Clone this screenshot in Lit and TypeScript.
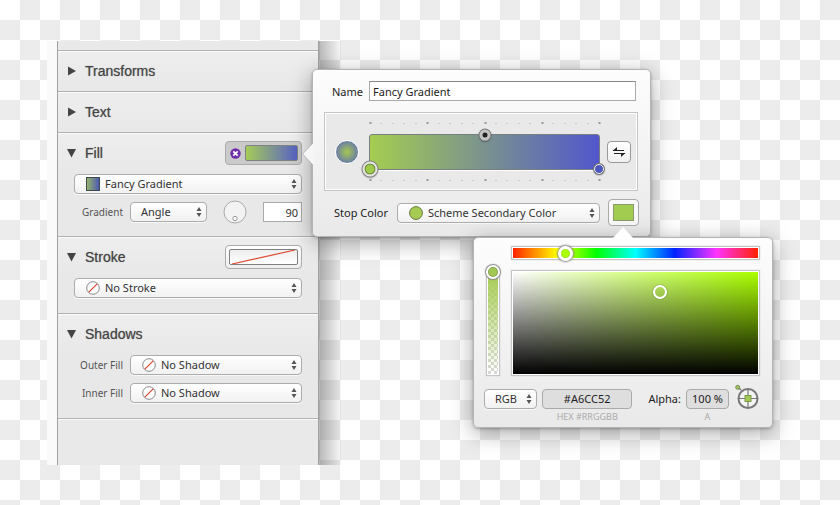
import { LitElement, html, css, svg, nothing } from "lit";
import { customElement, property } from "lit/decorators.js";

const controls = css`
  * { box-sizing: border-box; }
  button, input, select { font: inherit; color: inherit; margin: 0; }
  button { padding: 0; cursor: pointer; }
`;

@customElement("pop-select")
class PopSelect extends LitElement {
  @property() value = "";
  @property() label = "";
  @property() icon = "";
  static styles = [controls, css`
    :host { display: block; position: relative; height: 20px; min-width: 0; }
    .field {
      appearance: none; display: block; width: 100%; height: 20px; padding: 0 18px 0 10px;
      border: 1px solid #acacac; border-radius: 4px; outline: none;
      background: linear-gradient(#ffffff, #f1f1f1); box-shadow: 0 1px 0 #f8f8f8;
      color: #333; line-height: 18px;
    }
    .with-icon { padding-left: 30px; }
    .mark { position: absolute; left: 12px; top: 3px; pointer-events: none; }
    .arrows { position: absolute; right: 5px; top: 5px; pointer-events: none; }
  `];
  glyph() {
    switch (this.icon) {
      case "none":
        return svg`<circle cx="7" cy="7" r="6.3" fill="#fff" stroke="#888"/><path d="M2.8 11.2L11.2 2.8" stroke="#dd4433" stroke-width="1.2"/>`;
      case "gradient":
        return svg`<defs><linearGradient id="g"><stop offset="0" stop-color="#98b968"/><stop offset="1" stop-color="#4a55b5"/></linearGradient></defs><rect x=".5" y=".5" width="13" height="13" fill="url(#g)" stroke="#3d4a50"/>`;
      default:
        return svg`<circle cx="7" cy="7" r="6.4" fill="#a5cb52" stroke="#66763f"/>`;
    }
  }
  render() {
    return html`
      <select class="field ${this.icon ? "with-icon" : ""}" aria-label=${this.label}><option>${this.value}</option></select>
      ${this.icon ? html`<svg class="mark" width="14" height="14">${this.glyph()}</svg>` : nothing}
      <svg class="arrows" width="6" height="10"><path d="M.5 4L3 0L5.5 4ZM.5 6L3 10L5.5 6Z" fill="#555"/></svg>`;
  }
}

@customElement("side-section")
class SideSection extends LitElement {
  @property() heading = "";
  @property({ type: Boolean }) open = false;
  static styles = [controls, css`
    :host { display: block; border-top: 1px solid #b2b2b2; box-shadow: inset 0 1px 0 #fafafa; background: linear-gradient(#eeeeee, #e8e8e8 40px); }
    .head { display: flex; align-items: center; height: 40px; padding: 0 16px 0 9px; }
    .toggle {
      display: flex; align-items: center; gap: 8px; flex: 1; border: 0; background: none;
      font: 14px "Liberation Sans", Arial, sans-serif; color: #444; text-shadow: 0 0 1px #888;
    }
    .body { display: flex; flex-direction: column; gap: 8px; padding: 1px 16px 15px; }
  `];
  render() {
    return html`
      <div class="head">
        <button class="toggle" aria-expanded=${this.open}>
          <svg width="10" height="10"><path d=${this.open ? "M0 1H9L4.500 9.500Z" : "M1 .5V9.500L9 5Z"} fill="#444"/></svg>
          <span>${this.heading}</span>
        </button>
        <slot name="action"></slot>
      </div>
      ${this.open ? html`<div class="body"><slot></slot></div>` : nothing}`;
  }
}

@customElement("side-panel")
class SidePanel extends LitElement {
  static styles = [controls, css`
    :host { display: flex; flex-direction: column; box-sizing: border-box; width: 262px; border: solid #a0a0a0; border-width: 0 1px; background: #e9e9e9; color: #555; }
    .strip { height: 9px; }
    .rest { flex: 1; border-top: 1px solid #b2b2b2; box-shadow: inset 0 1px 0 #fafafa; }
    .row { display: grid; grid-template-columns: 49px minmax(0, 1fr); column-gap: 7px; align-items: center; }
    .name { text-align: right; white-space: nowrap; font-size: 10px; }
    .angle { display: flex; align-items: flex-start; height: 19px; }
    .angle pop-select { width: 77px; }
    .dial { border: 0; background: none; width: 24px; height: 24px; margin: -2px 0 0 16px; }
    .dial svg { display: block; }
    .number { width: 39px; height: 20px; margin-left: auto; padding: 0 3px; border: 1px solid #aaa; text-align: right; background: #fff; color: #333; border-radius: 0; }
    .well { display: flex; align-items: center; width: 77px; height: 24px; padding: 0 3px; border: 1px solid #acacac; border-radius: 4px; background: linear-gradient(#fff, #eee); }
    .well.active { background: #cacaca; padding-left: 4px; gap: 4px; }
    .ramp { flex: 1; height: 16px; border: 1px solid #7d8383; border-radius: 2px; background: linear-gradient(90deg, #a5cb58, #5862c4); }
    .blank { flex: 1; height: 16px; border: 1px solid #808080; border-radius: 2px; background: linear-gradient(#eee, #fff); display: block; }
  `];
  render() {
    return html`
      <div class="strip"></div>
      <side-section heading="Transforms"></side-section>
      <side-section heading="Text"></side-section>
      <side-section heading="Fill" open>
        <button slot="action" class="well active" aria-label="Edit fill">
          <svg width="11" height="11"><circle cx="5.500" cy="5.500" r="5.200" fill="#6f2da8"/><path d="M3.300 3.300L7.700 7.700M7.700 3.300L3.300 7.700" stroke="#fff" stroke-width="1.700"/></svg>
          <span class="ramp"></span>
        </button>
        <pop-select icon="gradient" label="Fill" value="Fancy Gradient"></pop-select>
        <div class="row">
          <span class="name">Gradient</span>
          <div class="angle">
            <pop-select label="Gradient" value="Angle"></pop-select>
            <button class="dial" aria-label="Angle dial">
              <svg width="24" height="24"><circle cx="12" cy="12" r="11" fill="#f3f3f3" stroke="#aaa"/><circle cx="12" cy="18.500" r="2.200" fill="#fff" stroke="#999"/></svg>
            </button>
            <input class="number" aria-label="Angle" .value=${"90"}>
          </div>
        </div>
      </side-section>
      <side-section heading="Stroke" open>
        <button slot="action" class="well" aria-label="Edit stroke">
          <svg class="blank" viewBox="0 0 67 14" preserveAspectRatio="none"><path d="M2 14L65 0" stroke="#dd4a33" stroke-width="1.200"/></svg>
        </button>
        <pop-select icon="none" label="Stroke" value="No Stroke"></pop-select>
      </side-section>
      <side-section heading="Shadows" open>
        ${["Outer Fill", "Inner Fill"].map((name) => html`
          <div class="row">
            <span class="name">${name}</span>
            <pop-select icon="none" label=${name} value="No Shadow"></pop-select>
          </div>`)}
      </side-section>
      <div class="rest"></div>`;
  }
}

const popover = css`
  :host {
    display: block; box-sizing: border-box; border: 1px solid #b4b4b4; border-radius: 5px; color: #222;
    background: linear-gradient(#fdfdfd, #e9e9e9); box-shadow: 0 1px 3px rgba(0, 0, 0, 0.25), 0 5px 22px rgba(0, 0, 0, 0.35);
  }
`;

@customElement("gradient-editor")
class GradientEditor extends LitElement {
  static styles = [controls, popover, css`
    .tail { position: absolute; left: -11px; top: 72px; }
    .name-row { display: flex; align-items: center; gap: 6px; padding: 11px 14px 0 19px; }
    .name-field { flex: 1; min-width: 0; height: 20px; padding: 0 3px; border: 1px solid #aaa; border-top-color: #888; border-radius: 0; background: #fff; }
    .stage { display: flex; align-items: center; gap: 7px; margin: 11px 12px 0 11px; padding: 0 6px 0 10px; height: 79px; border: 1px solid #c4c4c4; box-shadow: inset 0 0 0 1px #fff; background: #e9e9e9; }
    .kind { width: 24px; height: 24px; border: 1px solid #fff; border-radius: 50%; background: radial-gradient(circle, #a4c852, #6b7fa3 70%); margin-right: 3px; }
    .track { flex: 1; display: flex; flex-direction: column; gap: 9px; position: relative; }
    .dots { display: block; width: 100%; height: 3px; overflow: visible; }
    .ramp { position: relative; height: 36px; border: 1px solid #777f80; border-radius: 3px; background: linear-gradient(90deg, #a4cd50, #5157cc); box-shadow: 0 1px 0 #fff; }
    .stop { position: absolute; border-radius: 50%; transform: translate(-50%, -50%); border: 1px solid #eee; box-shadow: 0 0 0 1px #777, 0 1px 2px rgba(0, 0, 0, 0.6); }
    .start { left: 0; top: 100%; width: 15px; height: 15px; border: 2px solid #e4e4e4; background: #9fcb4a; box-shadow: inset 0 0 0 1px #687b45, 0 0 0 1px #888, 0 1px 2px rgba(0, 0, 0, 0.6); }
    .end { left: 100%; top: 100%; width: 10px; height: 10px; background: #4c57bd; }
    .mid { left: 50%; top: 0; width: 11px; height: 11px; border: 3px solid #c4c4c4; background: #222; }
    .swap { width: 24px; height: 22px; border: 1px solid #999; border-radius: 4px; background: linear-gradient(#fff, #f0f0f0); display: grid; place-items: center; }
    .color-row { display: flex; align-items: center; padding: 8px 11px 10px 21px; }
    .color-row > span { white-space: nowrap; margin-right: 9px; }
    .color-row pop-select { flex: 1; margin-right: 8px; }
    .swatch { width: 31px; height: 27px; padding: 4px; border: 1px solid #aaa; border-radius: 4px; background: #f9f9f9; }
    .chip { display: block; height: 17px; border: 1px solid #8c9a6c; background: #a2cc50; }
  `];
  dots() {
    return html`<svg class="dots" viewBox="0 0 230 3">${Array.from({ length: 21 }, (_, i) => {
      const major = i % 5 === 0;
      const x = Math.round(i * 11.45);
      return svg`<rect x=${x} y=${major ? 0 : 1} width=${major ? 2 : 1} height=${major ? 2 : 1} fill=${major ? "#999" : "#aaa"}/>`;
    })}</svg>`;
  }
  render() {
    return html`
      <svg class="tail" width="12" height="24"><path d="M12 0L1 12L12 24Z" fill="#f6f6f6"/><path d="M11 1L.5 12L11 23" fill="none" stroke="#aaa" stroke-opacity=".6"/></svg>
      <div class="name-row"><label for="name">Name</label><input id="name" class="name-field" .value=${"Fancy Gradient"}></div>
      <div class="stage">
        <button class="kind" aria-label="Radial gradient"></button>
        <div class="track">
          ${this.dots()}
          <div class="ramp">
            <button class="stop start" aria-label="First stop"></button>
            <button class="stop mid" aria-label="Midpoint"></button>
            <button class="stop end" aria-label="Last stop"></button>
          </div>
          ${this.dots()}
        </div>
        <button class="swap" aria-label="Reverse gradient">
          <svg width="14" height="12"><path d="M1 4.500H12M2 7.500H13" stroke="#222"/><path d="M.5 5L5 1V5ZM13.500 7L9 11V7Z" fill="#222"/></svg>
        </button>
      </div>
      <div class="color-row">
        <span>Stop Color</span>
        <pop-select icon="color" label="Stop Color" value="Scheme Secondary Color"></pop-select>
        <button class="swatch" aria-label="Edit stop color"><span class="chip"></span></button>
      </div>`;
  }
}

@customElement("color-picker")
class ColorPicker extends LitElement {
  @property({ type: Number }) saturation = 60;
  @property({ type: Number }) brightness = 80;
  static styles = [controls, popover, css`
    .tail { position: absolute; left: 137px; top: -12px; }
    .picker { display: grid; grid-template-columns: 14px minmax(0, 1fr); column-gap: 12px; row-gap: 12px; padding: 9px 13px 0 12px; }
    .hue { grid-column: 2; appearance: none; display: block; width: 100%; height: 12px; outline: none; background: linear-gradient(90deg, #f20, #ff0 18%, #0f0 34%, #0ff 50%, #02f 66%, #f3f 83%, #f20); border: 1px solid #fff; box-shadow: 0 0 1px 1px #c4c4c4; }
    .hue::-webkit-slider-thumb { appearance: none; width: 15px; height: 15px; border-radius: 50%; border: 3px solid #fff; background: #af0; box-shadow: 0 0 2px 1px #888, inset 0 0 1px #777; }
    .alpha { position: relative; height: 104px; margin: 0 1px; border: 1px solid #fff; box-shadow: 0 0 1px 1px #c4c4c4; background: linear-gradient(#a6cc52, rgba(166, 204, 82, 0)), repeating-conic-gradient(#d8d8d8 0 25%, #fff 0 50%) 0 0 / 6px 6px; }
    .alpha-range { appearance: none; position: absolute; left: -3px; top: -7px; width: 16px; height: 116px; writing-mode: vertical-lr; direction: rtl; background: none; outline: none; }
    .alpha-range::-webkit-slider-thumb { appearance: none; width: 14px; height: 14px; border-radius: 50%; border: 2px solid #fff; background: #a2c855; box-shadow: 0 0 1px 1px #888, inset 0 0 0 1px #809b4c; }
    .shade { position: relative; height: 104px; border: 1px solid #fff; box-shadow: 0 0 1px 1px #c4c4c4; background: linear-gradient(transparent, #000), linear-gradient(90deg, #fff, #af0); }
    .spot { position: absolute; transform: translate(-50%, -50%); width: 14px; height: 14px; border: 2px solid #fff; border-radius: 50%; background: none; box-shadow: 0 0 1px #333; }
    .values { display: flex; align-items: flex-start; padding: 14px 11px 0 10px; line-height: 20px; }
    .values pop-select { width: 53px; margin-right: 5px; }
    .entry { display: flex; flex-direction: column; align-items: center; }
    .text { width: 100%; height: 20px; padding: 0; text-align: center; border: 1px solid #aaa; border-radius: 4px; background: #dedede; }
    .hex { flex: 1; margin-right: 16px; }
    .opacity { width: 43px; margin: 0 6px 0 5px; }
    .hint { font-size: 9px; line-height: 12px; margin: 2px 0 4px; color: #aaa; white-space: nowrap; }
    .wheel { border: 0; background: none; width: 26px; height: 26px; margin-top: -5px; }
    .wheel svg { display: block; }
  `];
  render() {
    return html`
      <svg class="tail" width="24" height="13"><path d="M1 13L12 1L23 13Z" fill="#fefefe"/></svg>
      <div class="picker">
        <input class="hue" type="range" aria-label="Hue" min="0" max="360" .value=${"71"}>
        <div class="alpha"><input class="alpha-range" type="range" aria-label="Opacity" .value=${"100"}></div>
        <div class="shade"><button class="spot" aria-label="Saturation and brightness" style="left:${this.saturation}%;top:${100 - this.brightness}%"></button></div>
      </div>
      <div class="values">
        <pop-select label="Color model" value="RGB"></pop-select>
        <div class="entry hex"><input id="hex" class="text" .value=${"#A6CC52"}><label class="hint" for="hex">HEX #RRGGBB</label></div>
        <label for="alpha">Alpha:</label>
        <div class="entry opacity"><input id="alpha" class="text" .value=${"100 %"}><span class="hint">A</span></div>
        <button class="wheel" aria-label="Color scheme">
          <svg width="26" height="26"><path d="M3 3L6 6" stroke="#777" stroke-width="1.500"/><circle cx="13" cy="14.500" r="9.500" fill="#f4f4f4" stroke="#777" stroke-width="2"/><path d="M13 5V24M3.500 14.500H22.500" stroke="#777" stroke-width="1.200"/><rect x="10" y="11.500" width="6" height="6" fill="#a2c855" stroke="#7e9a48"/><circle cx="2.700" cy="3.300" r="2" fill="#a2c855" stroke="#7e8a60"/></svg>
        </button>
      </div>`;
  }
}

@customElement("app-root")
class AppRoot extends LitElement {
  static styles = css`
    :host {
      display: flex; position: relative; box-sizing: border-box; min-height: 100vh; padding: 41px 0 40px 47px;
      font: 11px "Noto Sans", "Open Sans", sans-serif;
      background: repeating-conic-gradient(#ececec 0 25%, #fff 0 50%) 0 0 / 40px 40px;
    }
    .gutter { width: 10px; background: #fafafa; }
    .shade { width: 22px; background: linear-gradient(90deg, rgba(0, 0, 0, 0.28), rgba(0, 0, 0, 0.03)); }
    .gradient { position: absolute; left: 312px; top: 69px; width: 339px; }
    .color { position: absolute; left: 473px; top: 237px; width: 300px; }
  `;
  render() {
    return html`
      <div class="gutter"></div>
      <side-panel></side-panel>
      <div class="shade"></div>
      <gradient-editor class="gradient"></gradient-editor>
      <color-picker class="color"></color-picker>`;
  }
}
